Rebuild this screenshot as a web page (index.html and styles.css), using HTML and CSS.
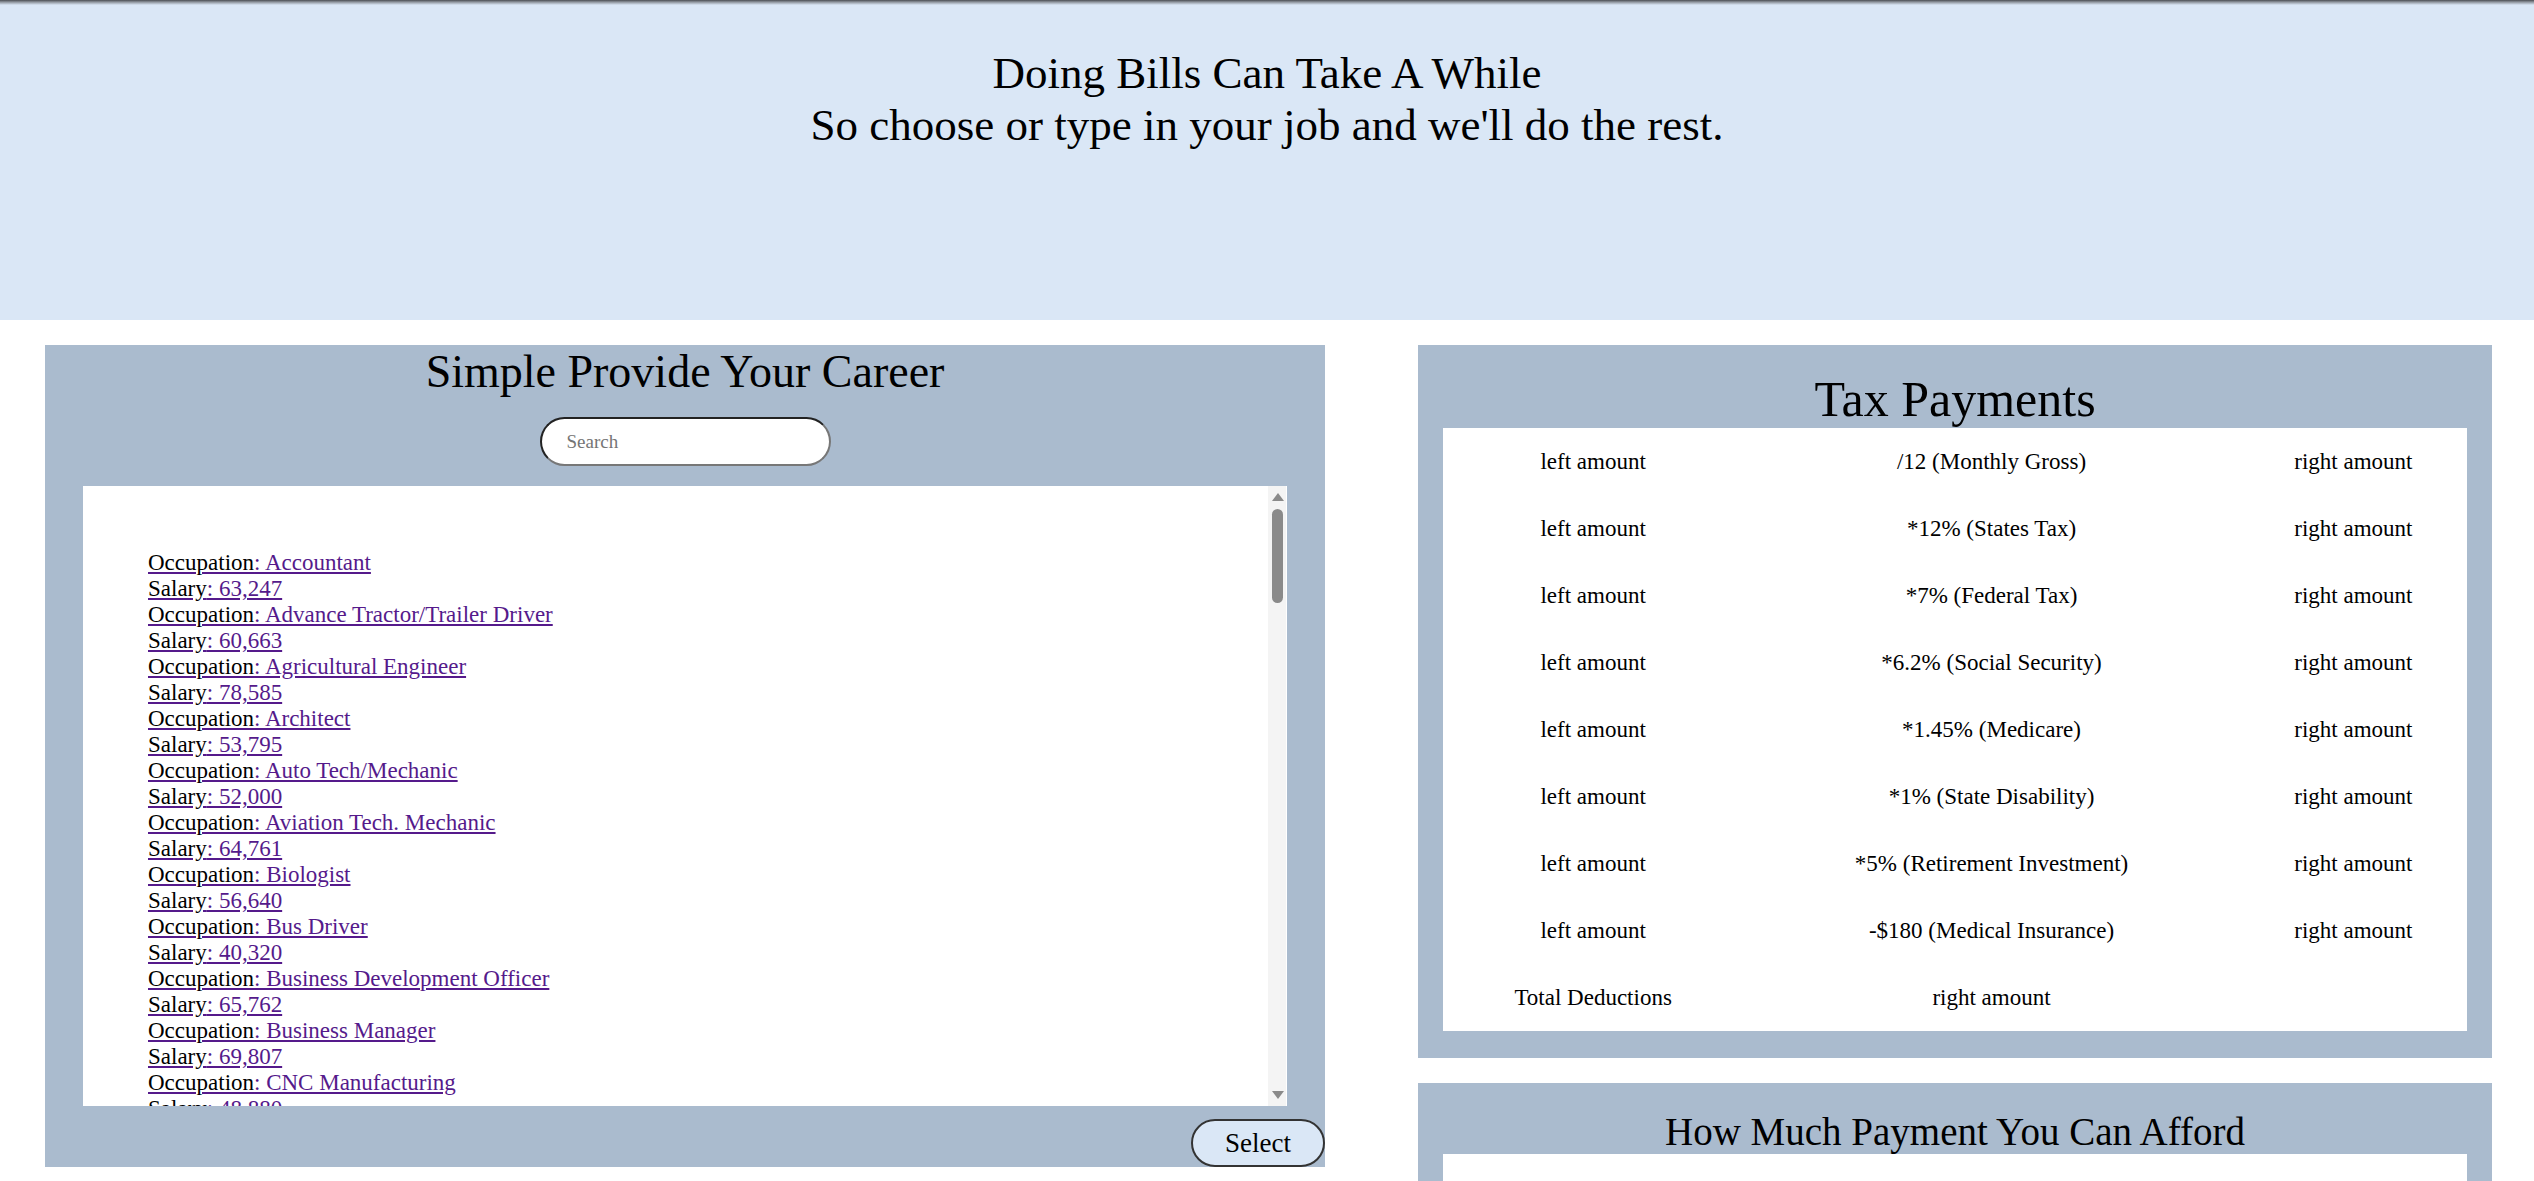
FILE: index.html
```html
<!DOCTYPE html>
<html lang="en">
<head>
<meta charset="utf-8">
<title>Doing Bills</title>
<link rel="stylesheet" href="styles.css">
</head>
<body>
<header class="hero">
  <p class="hero-line">Doing Bills Can Take A While</p>
  <p class="hero-line">So choose or type in your job and we'll do the rest.</p>
</header>
<main class="layout">
  <section class="career">
    <h2 class="career-title">Simple Provide Your Career</h2>
    <input class="search" type="text" placeholder="Search">
    <div class="list-wrap">
      <div class="job-list">
        <ul class="jobs">
          <li><a class="job" href="#"><span class="label">Occupation</span>: Accountant</a><a class="job" href="#"><span class="label">Salary</span>: 63,247</a></li>
          <li><a class="job" href="#"><span class="label">Occupation</span>: Advance Tractor/Trailer Driver</a><a class="job" href="#"><span class="label">Salary</span>: 60,663</a></li>
          <li><a class="job" href="#"><span class="label">Occupation</span>: Agricultural Engineer</a><a class="job" href="#"><span class="label">Salary</span>: 78,585</a></li>
          <li><a class="job" href="#"><span class="label">Occupation</span>: Architect</a><a class="job" href="#"><span class="label">Salary</span>: 53,795</a></li>
          <li><a class="job" href="#"><span class="label">Occupation</span>: Auto Tech/Mechanic</a><a class="job" href="#"><span class="label">Salary</span>: 52,000</a></li>
          <li><a class="job" href="#"><span class="label">Occupation</span>: Aviation Tech. Mechanic</a><a class="job" href="#"><span class="label">Salary</span>: 64,761</a></li>
          <li><a class="job" href="#"><span class="label">Occupation</span>: Biologist</a><a class="job" href="#"><span class="label">Salary</span>: 56,640</a></li>
          <li><a class="job" href="#"><span class="label">Occupation</span>: Bus Driver</a><a class="job" href="#"><span class="label">Salary</span>: 40,320</a></li>
          <li><a class="job" href="#"><span class="label">Occupation</span>: Business Development Officer</a><a class="job" href="#"><span class="label">Salary</span>: 65,762</a></li>
          <li><a class="job" href="#"><span class="label">Occupation</span>: Business Manager</a><a class="job" href="#"><span class="label">Salary</span>: 69,807</a></li>
          <li><a class="job" href="#"><span class="label">Occupation</span>: CNC Manufacturing</a><a class="job" href="#"><span class="label">Salary</span>: 48,880</a></li>
          <li><a class="job" href="#"><span class="label">Occupation</span>: Carpenter</a><a class="job" href="#"><span class="label">Salary</span>: 45,170</a></li>
          <li><a class="job" href="#"><span class="label">Occupation</span>: Chef</a><a class="job" href="#"><span class="label">Salary</span>: 51,530</a></li>
          <li><a class="job" href="#"><span class="label">Occupation</span>: Chemical Engineer</a><a class="job" href="#"><span class="label">Salary</span>: 81,750</a></li>
          <li><a class="job" href="#"><span class="label">Occupation</span>: Chemist</a><a class="job" href="#"><span class="label">Salary</span>: 67,230</a></li>
          <li><a class="job" href="#"><span class="label">Occupation</span>: Civil Engineer</a><a class="job" href="#"><span class="label">Salary</span>: 74,600</a></li>
          <li><a class="job" href="#"><span class="label">Occupation</span>: Computer Programmer</a><a class="job" href="#"><span class="label">Salary</span>: 72,480</a></li>
          <li><a class="job" href="#"><span class="label">Occupation</span>: Construction Manager</a><a class="job" href="#"><span class="label">Salary</span>: 79,860</a></li>
          <li><a class="job" href="#"><span class="label">Occupation</span>: Cosmetologist</a><a class="job" href="#"><span class="label">Salary</span>: 31,650</a></li>
          <li><a class="job" href="#"><span class="label">Occupation</span>: Dental Hygienist</a><a class="job" href="#"><span class="label">Salary</span>: 70,210</a></li>
          <li><a class="job" href="#"><span class="label">Occupation</span>: Dentist</a><a class="job" href="#"><span class="label">Salary</span>: 98,950</a></li>
          <li><a class="job" href="#"><span class="label">Occupation</span>: Electrician</a><a class="job" href="#"><span class="label">Salary</span>: 56,180</a></li>
          <li><a class="job" href="#"><span class="label">Occupation</span>: Elementary School Teacher</a><a class="job" href="#"><span class="label">Salary</span>: 57,980</a></li>
          <li><a class="job" href="#"><span class="label">Occupation</span>: Firefighter</a><a class="job" href="#"><span class="label">Salary</span>: 50,700</a></li>
          <li><a class="job" href="#"><span class="label">Occupation</span>: Graphic Designer</a><a class="job" href="#"><span class="label">Salary</span>: 48,700</a></li>
          <li><a class="job" href="#"><span class="label">Occupation</span>: Heavy Equipment Operator</a><a class="job" href="#"><span class="label">Salary</span>: 49,990</a></li>
          <li><a class="job" href="#"><span class="label">Occupation</span>: HVAC Technician</a><a class="job" href="#"><span class="label">Salary</span>: 48,730</a></li>
          <li><a class="job" href="#"><span class="label">Occupation</span>: Interior Designer</a><a class="job" href="#"><span class="label">Salary</span>: 53,370</a></li>
          <li><a class="job" href="#"><span class="label">Occupation</span>: Journalist</a><a class="job" href="#"><span class="label">Salary</span>: 46,270</a></li>
          <li><a class="job" href="#"><span class="label">Occupation</span>: Lawyer</a><a class="job" href="#"><span class="label">Salary</span>: 99,760</a></li>
          <li><a class="job" href="#"><span class="label">Occupation</span>: Librarian</a><a class="job" href="#"><span class="label">Salary</span>: 58,520</a></li>
          <li><a class="job" href="#"><span class="label">Occupation</span>: Machinist</a><a class="job" href="#"><span class="label">Salary</span>: 45,250</a></li>
          <li><a class="job" href="#"><span class="label">Occupation</span>: Marketing Manager</a><a class="job" href="#"><span class="label">Salary</span>: 88,490</a></li>
          <li><a class="job" href="#"><span class="label">Occupation</span>: Mechanical Engineer</a><a class="job" href="#"><span class="label">Salary</span>: 79,050</a></li>
          <li><a class="job" href="#"><span class="label">Occupation</span>: Medical Assistant</a><a class="job" href="#"><span class="label">Salary</span>: 34,800</a></li>
          <li><a class="job" href="#"><span class="label">Occupation</span>: Nurse (RN)</a><a class="job" href="#"><span class="label">Salary</span>: 73,300</a></li>
          <li><a class="job" href="#"><span class="label">Occupation</span>: Paralegal</a><a class="job" href="#"><span class="label">Salary</span>: 50,940</a></li>
          <li><a class="job" href="#"><span class="label">Occupation</span>: Pharmacist</a><a class="job" href="#"><span class="label">Salary</span>: 97,710</a></li>
          <li><a class="job" href="#"><span class="label">Occupation</span>: Photographer</a><a class="job" href="#"><span class="label">Salary</span>: 36,280</a></li>
          <li><a class="job" href="#"><span class="label">Occupation</span>: Physical Therapist</a><a class="job" href="#"><span class="label">Salary</span>: 86,850</a></li>
          <li><a class="job" href="#"><span class="label">Occupation</span>: Plumber</a><a class="job" href="#"><span class="label">Salary</span>: 55,160</a></li>
          <li><a class="job" href="#"><span class="label">Occupation</span>: Police Officer</a><a class="job" href="#"><span class="label">Salary</span>: 65,170</a></li>
          <li><a class="job" href="#"><span class="label">Occupation</span>: Real Estate Agent</a><a class="job" href="#"><span class="label">Salary</span>: 49,040</a></li>
          <li><a class="job" href="#"><span class="label">Occupation</span>: Social Worker</a><a class="job" href="#"><span class="label">Salary</span>: 50,390</a></li>
          <li><a class="job" href="#"><span class="label">Occupation</span>: Software Developer</a><a class="job" href="#"><span class="label">Salary</span>: 95,220</a></li>
          <li><a class="job" href="#"><span class="label">Occupation</span>: Veterinarian</a><a class="job" href="#"><span class="label">Salary</span>: 93,830</a></li>
          <li><a class="job" href="#"><span class="label">Occupation</span>: Web Developer</a><a class="job" href="#"><span class="label">Salary</span>: 73,760</a></li>
        </ul>
      </div>
      <div class="fake-scroll" aria-hidden="true">
        <span class="arrow arrow-up"></span>
        <span class="thumb"></span>
        <span class="arrow arrow-down"></span>
      </div>
    </div>
    <div class="actions"><button class="select-btn" type="button">Select</button></div>
  </section>

  <div class="side">
    <section class="card">
      <h2 class="card-title tax-title">Tax Payments</h2>
      <div class="card-body">
        <table class="tax-table">
          <colgroup><col class="c1"><col class="c2"><col class="c3"></colgroup>
          <tr><td>left amount</td><td>/12 (Monthly Gross)</td><td>right amount</td></tr>
          <tr><td>left amount</td><td>*12% (States Tax)</td><td>right amount</td></tr>
          <tr><td>left amount</td><td>*7% (Federal Tax)</td><td>right amount</td></tr>
          <tr><td>left amount</td><td>*6.2% (Social Security)</td><td>right amount</td></tr>
          <tr><td>left amount</td><td>*1.45% (Medicare)</td><td>right amount</td></tr>
          <tr><td>left amount</td><td>*1% (State Disability)</td><td>right amount</td></tr>
          <tr><td>left amount</td><td>*5% (Retirement Investment)</td><td>right amount</td></tr>
          <tr><td>left amount</td><td>-$180 (Medical Insurance)</td><td>right amount</td></tr>
          <tr><td>Total Deductions</td><td>right amount</td><td></td></tr>
        </table>
      </div>
    </section>
    <section class="card">
      <h2 class="card-title afford-title">How Much Payment You Can Afford</h2>
      <div class="card-body afford-body"></div>
    </section>
  </div>
</main>
</body>
</html>
```
FILE: styles.css
```css
* { box-sizing: border-box; }

html, body {
  margin: 0;
  padding: 0;
  background: #ffffff;
  font-family: "Liberation Serif", "DejaVu Serif", serif;
  color: #000;
}

/* header */
.hero {
  height: 320px;
  padding-top: 47px;
  background-color: #dae7f6;
  background-image: linear-gradient(to bottom, #4a4d52 0, #8d939b 2px, #dae7f6 5px);
  background-repeat: no-repeat;
  text-align: center;
  font-size: 45px;
  line-height: 52px;
}
.hero-line { margin: 0; }

/* two columns */
.layout {
  display: grid;
  grid-template-columns: 1280px 1074px;
  column-gap: 93px;
  align-items: start;
  padding: 25px 42px 0 45px;
}

/* career panel */
.career {
  background: #aabbce;
  padding-top: 3px;
  display: flex;
  flex-direction: column;
  align-items: center;
}
.career-title {
  margin: 0;
  font-weight: normal;
  font-size: 46px;
  line-height: 48px;
}
.search {
  margin-top: 21px;
  width: 291px;
  height: 49px;
  border: 2px inset #777;
  border-radius: 25px;
  background: #fff;
  padding: 0 0 0 25px;
  font-family: "Liberation Serif", "DejaVu Serif", serif;
  font-size: 19px;
  outline: none;
}
.search::placeholder { color: #757575; }

.list-wrap {
  position: relative;
  margin-top: 20px;
  width: 1204px;
  height: 620px;
}
.job-list {
  width: 100%;
  height: 100%;
  background: #fff;
  overflow-y: auto;
}
.jobs {
  list-style: none;
  margin: 0;
  padding: 64px 0 40px 65px;
  font-size: 23px;
  line-height: 26px;
}
.job {
  display: block;
  width: fit-content;
  color: #551a8b;
  text-decoration: underline;
}
.label { color: #000; }

/* drawn scrollbar overlay */
.fake-scroll {
  position: absolute;
  top: 0;
  right: 1px;
  width: 18px;
  height: 100%;
  background: #f4f4f4;
  display: flex;
  flex-direction: column;
  align-items: flex-start;
  padding: 7px 0 7px 4px;
}
.arrow {
  display: block;
  width: 0;
  height: 0;
  border-left: 6px solid transparent;
  border-right: 6px solid transparent;
}
.arrow-up { border-bottom: 8px solid #8a8a8a; }
.arrow-down { border-top: 8px solid #8a8a8a; margin-top: auto; }
.thumb {
  display: block;
  margin-top: 8px;
  width: 11px;
  height: 94px;
  border-radius: 6px;
  background: #8a8a8a;
}

.actions {
  align-self: stretch;
  display: flex;
  justify-content: flex-end;
  margin-top: 13px;
}
.select-btn {
  width: 134px;
  height: 48px;
  background: #dae7f6;
  border: 2px solid #333;
  border-radius: 24px;
  font-family: "Liberation Serif", "DejaVu Serif", serif;
  font-size: 27px;
  color: #000;
  padding: 0;
}

/* right column */
.side {
  display: flex;
  flex-direction: column;
  gap: 25px;
}
.card {
  background: #aabbce;
  padding: 27px 25px 27px;
}
.card-title {
  margin: 0;
  font-weight: normal;
  text-align: center;
}
.tax-title {
  font-size: 50px;
  line-height: 54px;
  margin-bottom: 2px;
}
.afford-title {
  font-size: 39px;
  line-height: 44px;
}
.card-body { background: #fff; }
.afford-body { height: 320px; }

.tax-table {
  width: 100%;
  table-layout: fixed;
  border-collapse: collapse;
  font-size: 23px;
}
.tax-table .c1 { width: 300px; }
.tax-table .c2 { width: 496px; }
.tax-table .c3 { width: 227px; }
.tax-table td {
  height: 67px;
  padding: 0;
  text-align: center;
  vertical-align: middle;
}
```
